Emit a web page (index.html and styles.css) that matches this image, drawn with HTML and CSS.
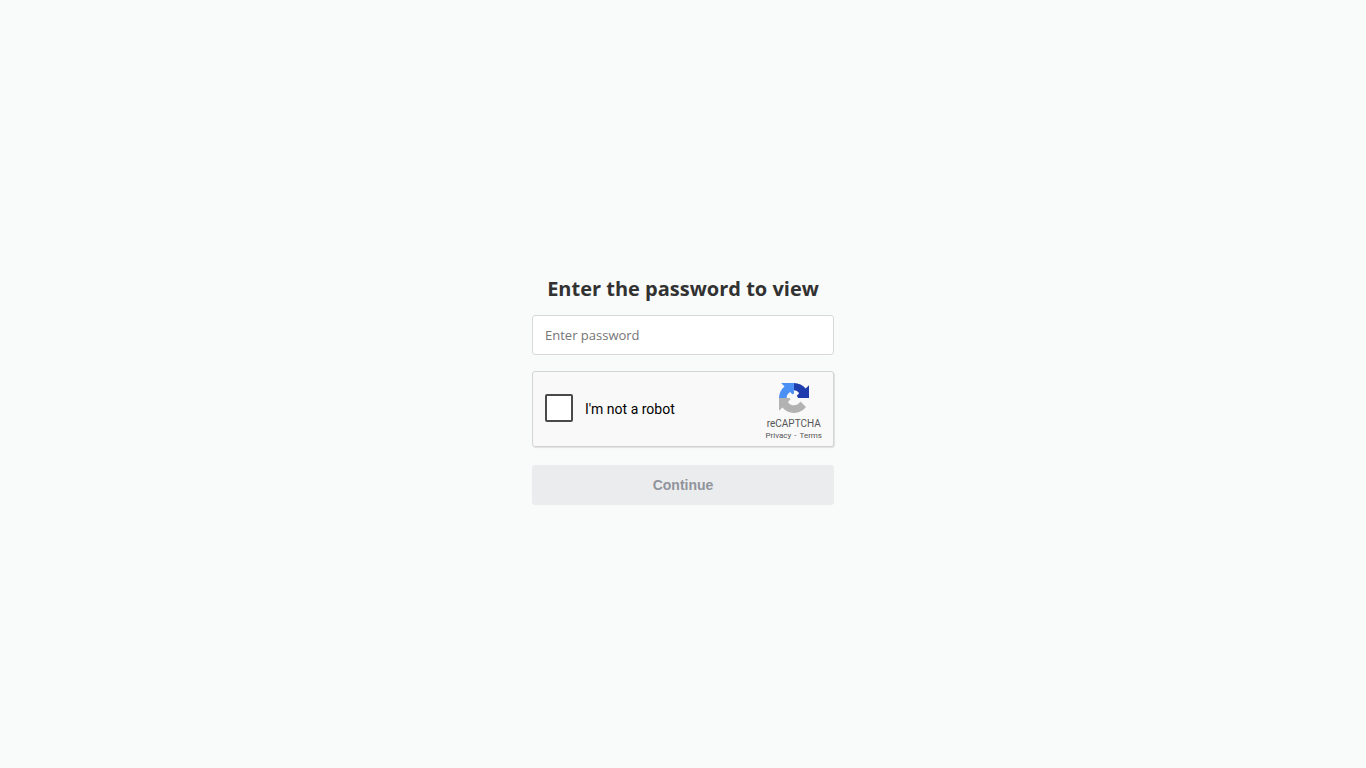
FILE: index.html
```html
<!DOCTYPE html>
<html lang="en">
<head>
<meta charset="utf-8">
<meta name="viewport" content="width=device-width, initial-scale=1">
<title>Enter the password to view</title>
<link rel="stylesheet" href="styles.css">
</head>
<body>
<main class="page">
  <form class="gate">
    <h1 class="title"><label for="password">Enter the password to view</label></h1>
    <input class="password" id="password" type="password" placeholder="Enter password">
    <div class="captcha">
      <input class="captcha-box" id="robot" type="checkbox">
      <label class="captcha-label" for="robot">I'm not a robot</label>
      <div class="brand">
        <svg class="brand-logo" viewBox="0 0 64 64" aria-hidden="true">
          <path fill="#1f3dac" d="M64 32V4.687l-7.16 7.16C50.948 4.674 42.033.093 32.05.093L31.8 15.5c4.6 0 8.6 2.4 11.2 6.5l-5 5 3 5z"/>
          <path fill="#4a90f5" d="M31.862.094H4.594l7.16 7.16C4.58 13.147 0 22.06 0 32.046h16.26c0-5.4 2.9-10.2 7.29-12.966l5 5 3.31-1z"/>
          <path fill="#b2b2b2" d="M0 32.045v27.268l7.194-7.16c5.86 7.173 14.774 11.754 24.76 11.754 10.4 0 19.622-4.96 25.458-12.64l-11.736-11.86c-2.8 5-7.8 8.24-13.722 8.24-5.2 0-10.2-2.8-12.963-7.287l5.3-5.3-1.3-3z"/>
        </svg>
        <span class="brand-name">reCAPTCHA</span>
        <span class="brand-links"><a href="#privacy">Privacy</a><span>-</span><a href="#terms">Terms</a></span>
      </div>
    </div>
    <button class="continue" type="submit" disabled>Continue</button>
  </form>
</main>
</body>
</html>
```
FILE: styles.css
```css
* { box-sizing: border-box; }
body {
  margin: 0;
  background: #f9fbfa;
  color: #323232;
  font-family: "Open Sans", sans-serif;
}
.page {
  display: flex;
  min-height: 100vh;
  padding-top: 12px;
  align-items: center;
  justify-content: center;
}
.gate {
  display: flex;
  flex-direction: column;
  width: 100%;
  max-width: 302px;
}
.title {
  margin: 0 0 12px;
  font-size: 20px;
  line-height: 28px;
  font-weight: 700;
  text-align: center;
  white-space: nowrap;
}
.password {
  width: 100%;
  height: 40px;
  padding: 0 12px;
  border: 1px solid #d8d8d8;
  border-radius: 3px;
  background: #fff;
  font: 13px "Open Sans", sans-serif;
}
.password::placeholder { color: #757575; }
.captcha {
  display: flex;
  align-items: center;
  height: 76px;
  margin: 16px 0 18px;
  padding: 0 11px 0 12px;
  border: 1px solid #d3d3d3;
  border-radius: 3px;
  background: #f9f9f9;
  box-shadow: 1px 1px 1px rgba(0, 0, 0, 0.1);
  color: #000;
  font-family: Roboto, sans-serif;
}
.captcha-box {
  appearance: none;
  width: 28px;
  height: 28px;
  margin: 0 12px 2px 0;
  border: 2px solid #4a4a4a;
  border-radius: 2px;
  background: #fff;
}
.captcha-label {
  flex: 1;
  font-size: 14px;
  line-height: 17px;
}
.brand {
  display: flex;
  flex-direction: column;
  align-items: center;
  padding-top: 7px;
  color: #555;
}
.brand-logo {
  width: 30px;
  height: 30px;
  margin-bottom: 5px;
}
.brand-name {
  font-size: 10px;
  line-height: 12px;
}
.brand-links {
  display: flex;
  gap: 3px;
  font-size: 8px;
  line-height: 12px;
}
.brand-links a {
  color: inherit;
  text-decoration: none;
}
.continue {
  height: 40px;
  border: 0;
  border-radius: 3px;
  background: #ebecee;
  color: #90949c;
  font: bold 14px "Liberation Sans", Arial, sans-serif;
}
```
